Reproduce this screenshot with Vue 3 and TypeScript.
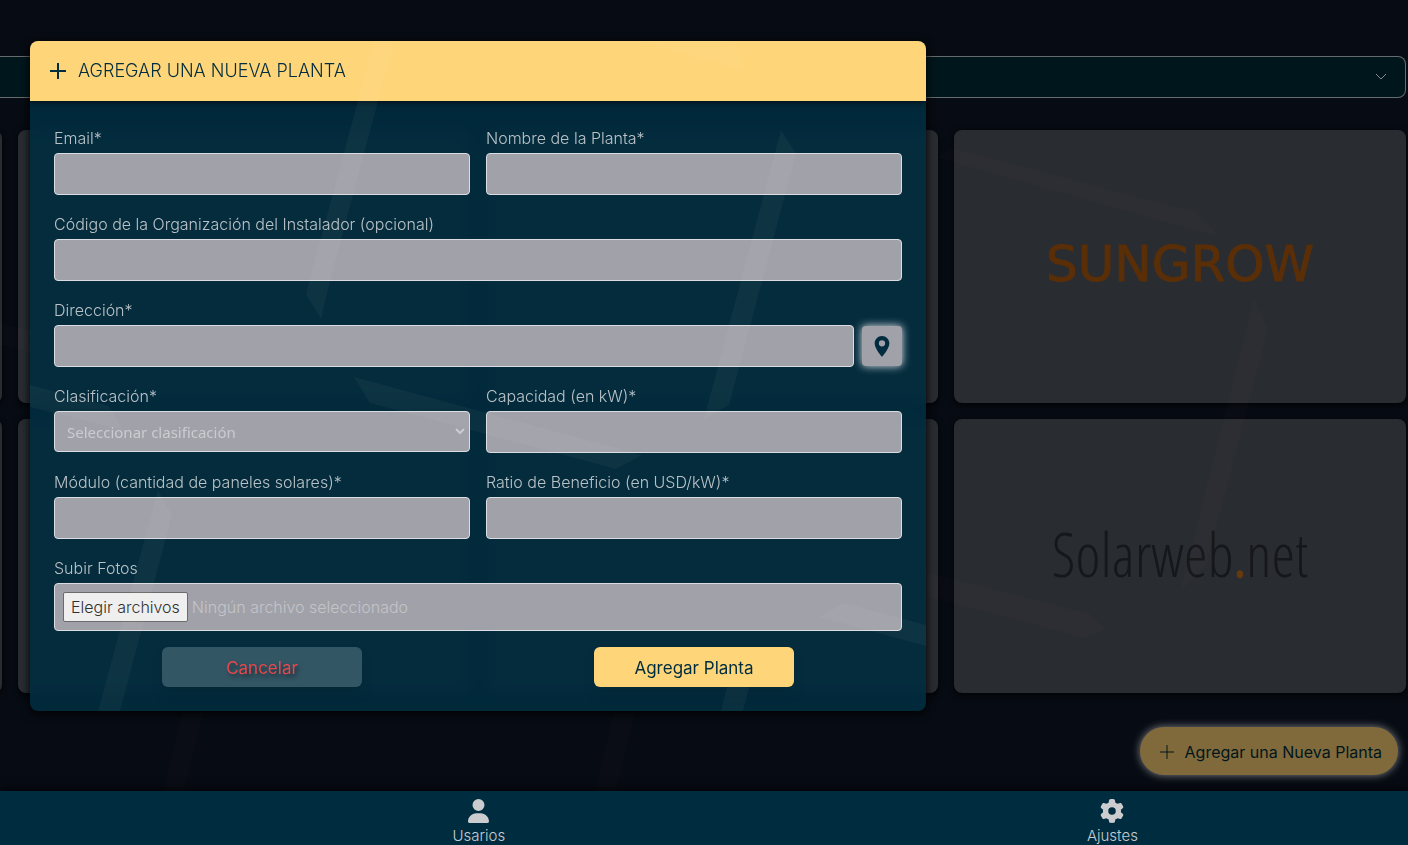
<script setup lang="ts">
import { ref } from 'vue'

interface Card { id: number; brand?: 'sungrow' | 'solarweb' }

const cards: Card[] = [
  { id: 1 }, { id: 2 }, { id: 3 }, { id: 4, brand: 'sungrow' },
  { id: 5 }, { id: 6 }, { id: 7 }, { id: 8, brand: 'solarweb' },
]

const form = ref({
  email: '',
  name: '',
  organization: '',
  address: '',
  classification: '',
  capacity: '',
  modules: '',
  ratio: '',
})
</script>

<template>
  <div class="app">
    <main class="page">
      <button class="filter" type="button" aria-label="Filtrar">
        <svg class="chevron" viewBox="0 0 12 8" aria-hidden="true"><path d="M1 1l5 5 5-5" /></svg>
      </button>

      <section class="cards">
        <article v-for="card in cards" :key="card.id" class="card">
          <span v-if="card.brand === 'sungrow'" class="sungrow">SUNGROW</span>
          <span v-else-if="card.brand === 'solarweb'" class="solarweb">Solarweb<b>.</b>net</span>
        </article>
      </section>

      <button class="fab" type="button">
        <svg viewBox="0 0 14 14" aria-hidden="true"><path d="M7 0v14M0 7h14" /></svg>
        Agregar una Nueva Planta
      </button>

      <svg class="streaks page-streaks" viewBox="0 0 1408 791" preserveAspectRatio="none" aria-hidden="true">
        <polygon points="183,711 204,711 184,791 163,791" />
        <polygon points="614,711 635,711 616,791 595,791" />
        <polygon points="938,158 952,148 1195,212 1222,238" />
        <polygon points="1254,298 1268,330 1206,565 1180,592" />
        <polygon points="0,323 30,330 30,352 0,345" />
        <polygon points="926,572 1090,614 1106,630 1085,638 926,596" />
      </svg>
    </main>

    <div class="overlay">
      <form class="modal" @submit.prevent>
        <header class="modal-head">
          <svg viewBox="0 0 16 16" aria-hidden="true"><path d="M8 0v16M0 8h16" /></svg>
          <h2>AGREGAR UNA NUEVA PLANTA</h2>
        </header>
        <div class="fields">
          <div class="field">
            <label for="email">Email*</label>
            <input id="email" v-model="form.email" type="email">
          </div>
          <div class="field">
            <label for="name">Nombre de la Planta*</label>
            <input id="name" v-model="form.name" type="text">
          </div>
          <div class="field wide">
            <label for="organization">Código de la Organización del Instalador (opcional)</label>
            <input id="organization" v-model="form.organization" type="text">
          </div>
          <div class="field wide">
            <label for="address">Dirección*</label>
            <div class="address">
              <input id="address" v-model="form.address" type="text">
              <button class="pin" type="button" aria-label="Ubicación">
                <svg viewBox="5 2 14 20" aria-hidden="true">
                  <path d="M12 2C8.13 2 5 5.13 5 9c0 5.25 7 13 7 13s7-7.75 7-13c0-3.87-3.13-7-7-7zm0 10a3 3 0 1 1 0-6 3 3 0 0 1 0 6z" />
                </svg>
              </button>
            </div>
          </div>
          <div class="field">
            <label for="classification">Clasificación*</label>
            <div class="select">
              <select id="classification" v-model="form.classification">
                <option value="">Seleccionar clasificación</option>
              </select>
              <svg viewBox="0 0 10 7" aria-hidden="true"><path d="M1 1l4 4 4-4" /></svg>
            </div>
          </div>
          <div class="field">
            <label for="capacity">Capacidad (en kW)*</label>
            <input id="capacity" v-model="form.capacity" type="text">
          </div>
          <div class="field">
            <label for="modules">Módulo (cantidad de paneles solares)*</label>
            <input id="modules" v-model="form.modules" type="text">
          </div>
          <div class="field">
            <label for="ratio">Ratio de Beneficio (en USD/kW)*</label>
            <input id="ratio" v-model="form.ratio" type="text">
          </div>
          <div class="field wide">
            <label for="photos">Subir Fotos</label>
            <div class="file">
              <span class="file-button">Elegir archivos</span>
              <span>Ningún archivo seleccionado</span>
              <input id="photos" type="file" multiple>
            </div>
          </div>
          <button class="action cancel" type="button">Cancelar</button>
          <button class="action submit" type="submit">Agregar Planta</button>
        </div>
        <svg class="streaks" viewBox="0 0 896 670" preserveAspectRatio="none" aria-hidden="true">
          <polygon points="344,0 364,0 300,240 291,278 276,253" />
          <polygon points="610,0 703,0 716,30" />
          <polygon points="751,89 766,113 699,364 674,378" />
          <polygon points="324,336 612,414 586,428 340,362" />
          <polygon points="0,344 79,365 93,389 0,366" />
          <polygon points="128,449 142,474 90,670 68,670" />
          <polygon points="790,576 814,562 896,584 896,605" />
          <polygon points="697,646 719,646 713,670 691,670" />
        </svg>
      </form>
    </div>

    <nav class="tabs">
      <a href="#usuarios">
        <svg viewBox="0 0 448 512" aria-hidden="true">
          <path d="M224 256A128 128 0 1 0 224 0a128 128 0 1 0 0 256zm-45.7 48C79.8 304 0 383.8 0 482.3C0 498.7 13.3 512 29.7 512l388.6 0c16.4 0 29.7-13.3 29.7-29.7C448 383.8 368.2 304 269.7 304l-91.4 0z" />
        </svg>
        Usarios
      </a>
      <a href="#ajustes">
        <svg viewBox="0 0 512 512" aria-hidden="true">
          <path d="M495.9 166.6c3.2 8.7 .5 18.4-6.4 24.6l-43.3 39.4c1.1 8.3 1.7 16.8 1.7 25.4s-.6 17.1-1.7 25.4l43.3 39.4c6.9 6.2 9.6 15.9 6.4 24.6c-4.4 11.9-9.7 23.3-15.8 34.3l-4.7 8.1c-6.6 11-14 21.4-22.1 31.2c-5.9 7.2-15.7 9.6-24.5 6.8l-55.7-17.7c-13.4 10.3-28.2 18.9-44 25.4l-12.5 57.1c-2 9.1-9 16.3-18.2 17.8c-13.8 2.3-28 3.5-42.5 3.5s-28.7-1.2-42.5-3.5c-9.2-1.5-16.2-8.7-18.2-17.8l-12.5-57.1c-15.8-6.5-30.6-15.1-44-25.4L83.1 425.9c-8.8 2.8-18.6 .3-24.5-6.8c-8.1-9.8-15.5-20.2-22.1-31.2l-4.7-8.1c-6.1-11-11.4-22.4-15.8-34.3c-3.2-8.7-.5-18.4 6.4-24.6l43.3-39.4C64.6 273.1 64 264.6 64 256s.6-17.1 1.7-25.4L22.4 191.2c-6.9-6.2-9.6-15.9-6.4-24.6c4.4-11.9 9.7-23.3 15.8-34.3l4.7-8.1c6.6-11 14-21.4 22.1-31.2c5.9-7.2 15.7-9.6 24.5-6.8l55.7 17.7c13.4-10.3 28.2-18.9 44-25.4l12.5-57.1c2-9.1 9-16.3 18.2-17.8C227.3 1.2 241.5 0 256 0s28.7 1.2 42.5 3.5c9.2 1.5 16.2 8.7 18.2 17.8l12.5 57.1c15.8 6.5 30.6 15.1 44 25.4l55.7-17.7c8.8-2.8 18.6-.3 24.5 6.8c8.1 9.8 15.5 20.2 22.1 31.2l4.7 8.1c6.1 11 11.4 22.4 15.8 34.3zM256 336a80 80 0 1 0 0-160 80 80 0 1 0 0 160z" />
        </svg>
        Ajustes
      </a>
    </nav>
  </div>
</template>

<style>
body { background: #070b13; }
</style>

<style scoped>
.app {
  position: relative;
  display: flex;
  flex-direction: column;
  height: 100vh;
  overflow: hidden;
  background: #070b13;
  font: 300 16px/24px Inter, "Open Sans", sans-serif;
  color: #b9c3c7;
}
.app *, .app *::before { box-sizing: border-box; }
button, input, select { font: inherit; color: inherit; margin: 0; }
.page {
  position: relative;
  flex: 1;
  display: flex;
  flex-direction: column;
  padding: 56px 2px 16px 0;
  min-height: 0;
}
.filter {
  display: flex;
  align-items: center;
  justify-content: flex-end;
  height: 42px;
  flex: none;
  padding: 0 18px;
  border: 1px solid #666c6e;
  border-left: 0;
  border-radius: 0 8px 8px 0;
  background: #00161d;
}
.chevron { width: 12px; height: 8px; fill: none; stroke: #83898a; }
.cards {
  display: grid;
  grid-template-columns: repeat(4, calc((100% - 50px) / 3));
  justify-content: end;
  gap: 16px;
  margin-top: 32px;
}
.card {
  display: flex;
  align-items: center;
  justify-content: center;
  aspect-ratio: 904 / 547;
  border-radius: 8px;
  background: #292c31;
  box-shadow: 0 2px 6px rgba(0, 0, 0, .8);
}
.sungrow {
  padding-bottom: 6px;
  font: 400 50px/60px "DejaVu Sans", sans-serif;
  color: #5a2f08;
  -webkit-text-stroke: 1px #5a2f08;
}
.solarweb {
  padding-bottom: 4px;
  font: 300 60px/64px "Open Sans Condensed Light", "Open Sans Condensed", sans-serif;
  color: #16171a;
}
.solarweb b { color: #663a0e; font-weight: 700; }
.fab {
  display: flex;
  align-items: center;
  gap: 11px;
  align-self: flex-end;
  height: 48px;
  margin: 34px 8px 0 0;
  padding: 3px 16px 0 20px;
  border: 0;
  border-radius: 24px;
  background: #806a3c;
  color: #00161d;
  font-weight: 400;
  box-shadow: 0 0 8px rgba(255, 255, 255, .5);
}
.fab svg { width: 14px; height: 14px; stroke: #00161d; }
.streaks {
  position: absolute;
  inset: 0;
  width: 100%;
  height: 100%;
  pointer-events: none;
  fill: rgba(255, 255, 220, .04);
}
.page-streaks { fill: rgba(255, 220, 220, .015); }
.overlay { position: absolute; inset: 0; padding: 41px 30px; }
.modal {
  position: relative;
  max-width: 896px;
  overflow: hidden;
  border-radius: 8px;
  background: rgba(0, 44, 63, .9);
  backdrop-filter: blur(8px);
  box-shadow: 0 2px 10px #000000;
}
.modal-head {
  display: flex;
  align-items: center;
  gap: 12px;
  height: 60px;
  padding: 0 20px;
  background: #fed579;
  color: #002c3f;
  box-shadow: 0 2px 6px rgba(0, 0, 0, .6);
}
.modal-head svg { width: 16px; height: 16px; stroke: #002c3f; stroke-width: 2; }
h2 { margin: 0; font-size: 18px; font-weight: 300; }
.fields {
  display: grid;
  grid-template-columns: 1fr 1fr;
  gap: 16px;
  padding: 24px;
}
.field { display: flex; flex-direction: column; gap: 3px; min-width: 0; }
label { padding-top: 1px; }
.wide { grid-column: span 2; }
input, select, .file {
  width: 100%;
  height: 42px;
  padding: 0 12px;
  border: 1px solid #dcdde2;
  border-radius: 4px;
  background: #a1a1aa;
}
.address { display: flex; gap: 8px; align-items: center; }
.pin {
  display: flex;
  align-items: center;
  justify-content: center;
  flex: none;
  width: 40px;
  height: 40px;
  padding: 0;
  border: 0;
  border-radius: 4px;
  background: #a1a1aa;
  box-shadow: 0 0 8px rgba(255, 255, 255, .9);
}
.pin svg { width: 16px; height: 21px; fill: #002c3f; }
.select { position: relative; display: flex; }
select { appearance: none; height: 41px; color: #cbcccf; font-family: "Noto Sans", sans-serif; font-size: 15px; font-weight: 400; }
.select svg {
  position: absolute;
  right: 5px;
  top: 17px;
  width: 10px;
  height: 7px;
  fill: none;
  stroke: #cbcccf;
  stroke-width: 2;
}
.file {
  position: relative;
  display: flex;
  align-items: center;
  gap: 4px;
  height: 48px;
  padding: 0 8px;
  color: #c3c4c7;
}
.file input { position: absolute; inset: 0; height: 100%; opacity: 0; }
.file-button {
  padding: 2px 7px;
  border: 1px solid #6b6b6b;
  border-radius: 2px;
  background: #efefef;
  color: #303030;
}
.action {
  justify-self: center;
  width: 200px;
  height: 40px;
  padding: 2px 0 0;
  border: 0;
  border-radius: 6px;
  font-size: 17px;
  font-weight: 400;
  box-shadow: 0 8px 14px rgba(0, 0, 0, .08);
}
.cancel { background: #335665; color: #e5484d; text-shadow: 2px 3px 4px rgba(0, 0, 0, .5); }
.submit { background: #fed579; color: #002c3f; }
.tabs {
  position: relative;
  display: grid;
  grid-template-columns: 45vw 45vw;
  flex: none;
  padding: 8px 0 0 162px;
  background: #002c3f;
  box-shadow: 0 -2px 8px rgba(0, 0, 0, .7);
}
.tabs a {
  display: flex;
  flex-direction: column;
  align-items: center;
  gap: 4px;
  color: #c8cdcf;
  font-size: 15px;
  line-height: 18px;
  text-decoration: none;
}
.tabs svg { height: 24px; flex: none; fill: #cacccd; }
</style>
